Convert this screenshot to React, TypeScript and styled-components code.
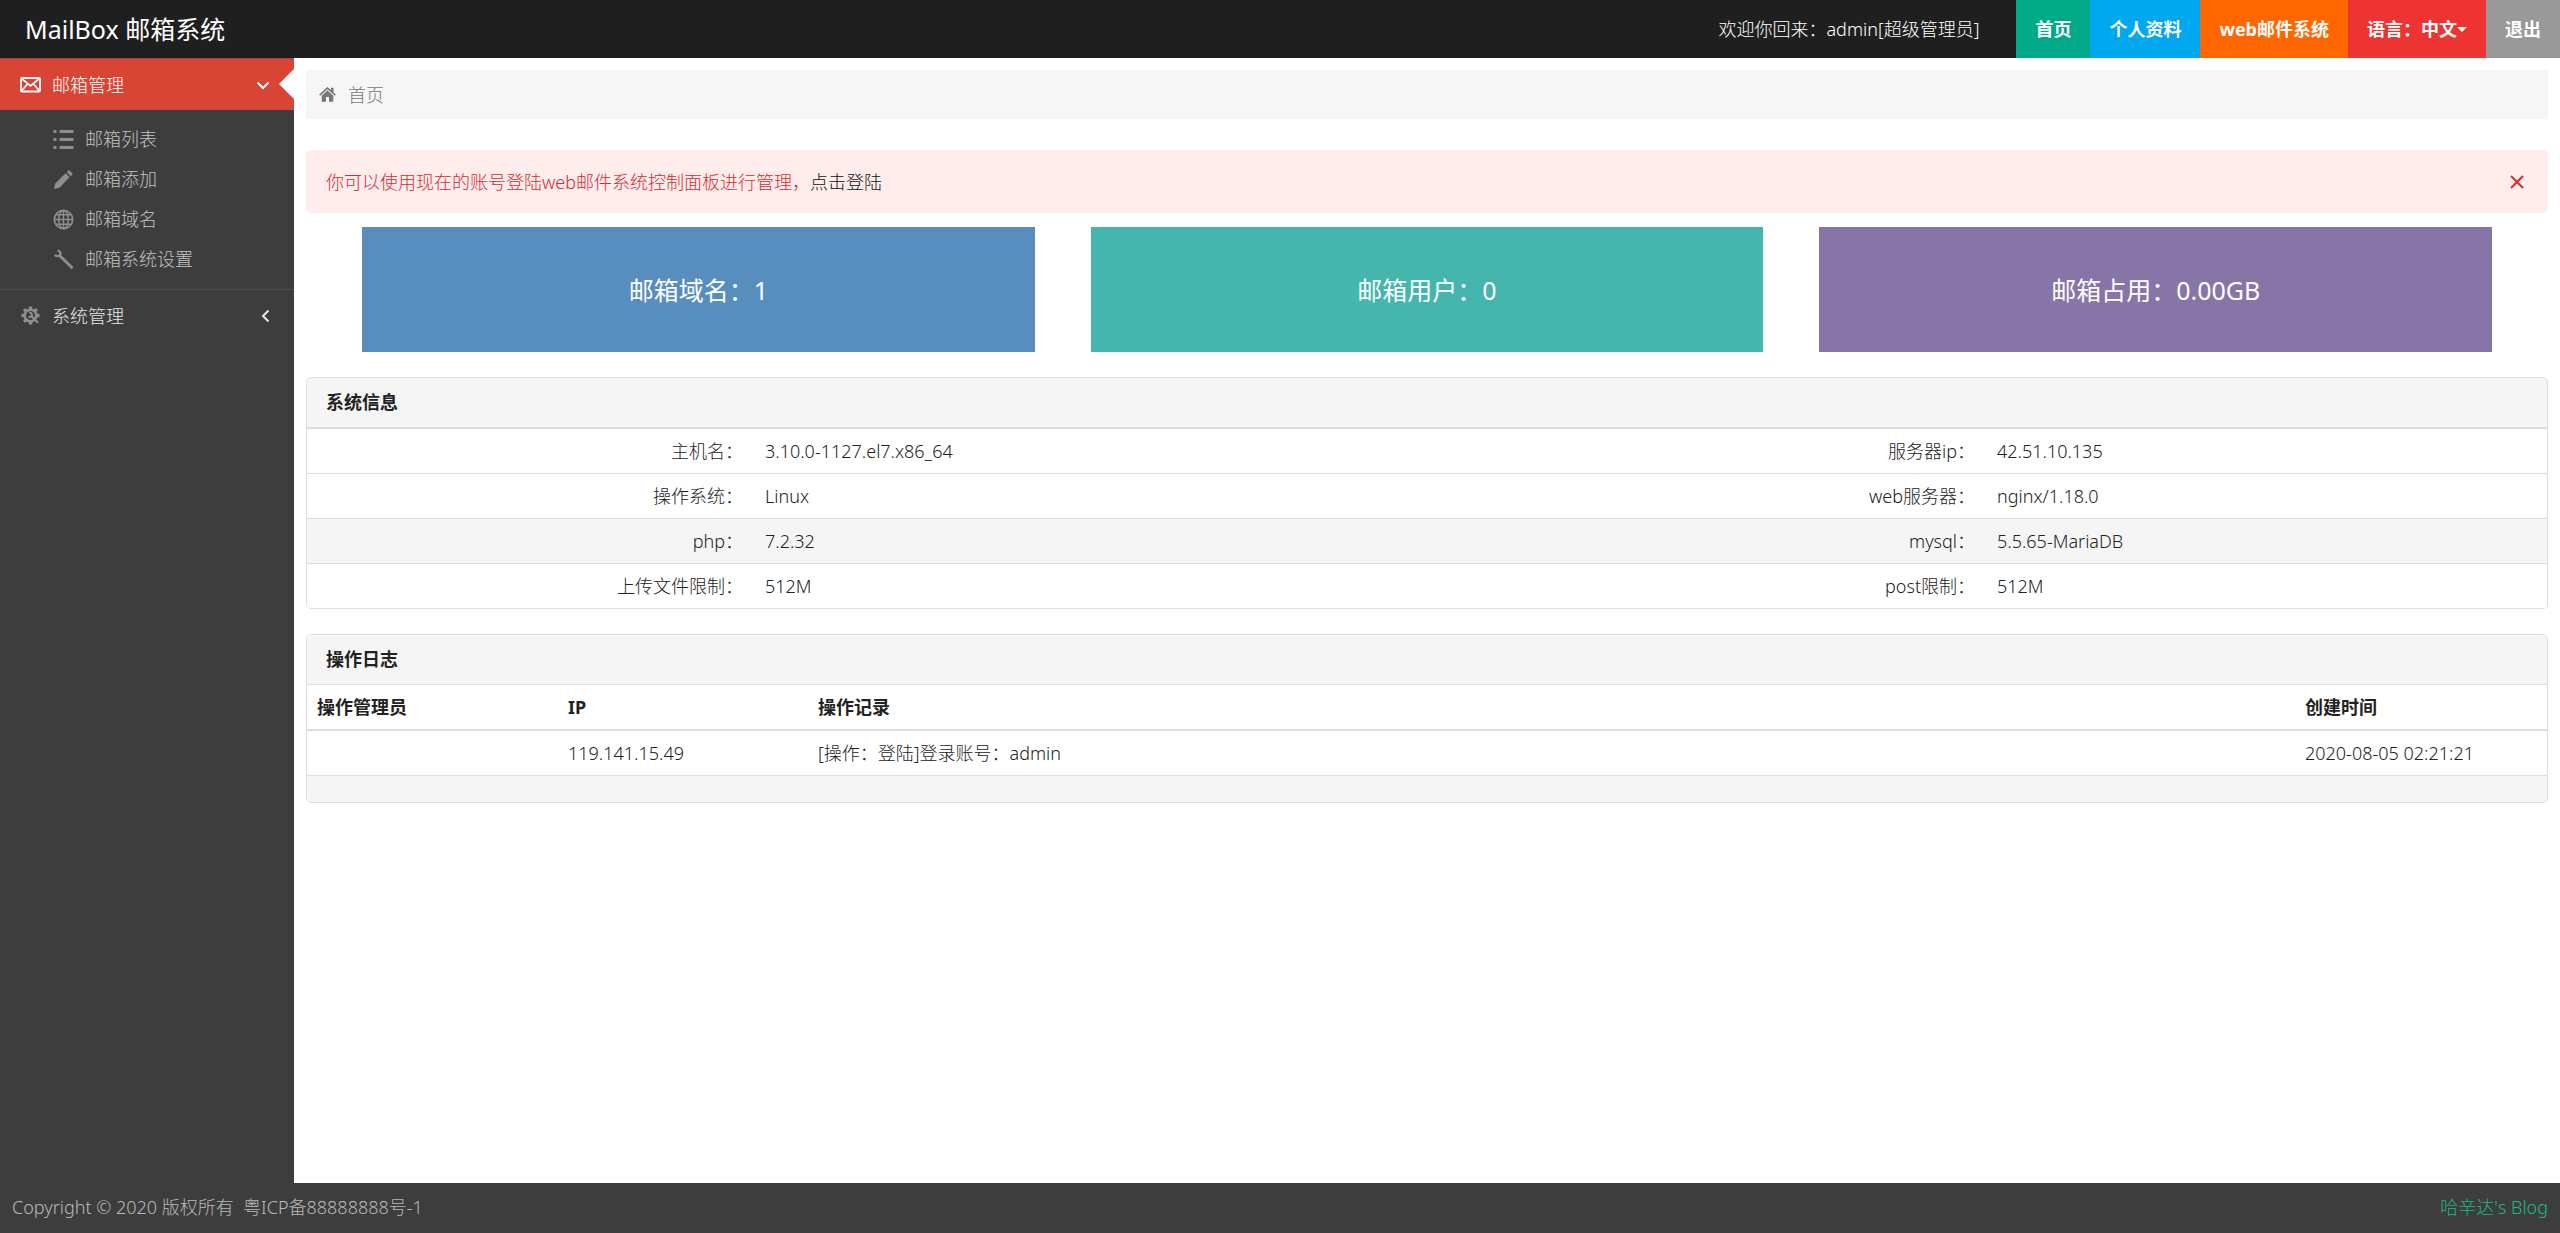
import React from "react";
import styled, { createGlobalStyle } from "styled-components";

const GlobalStyle = createGlobalStyle`
  * { box-sizing: border-box; }
  body {
    margin: 0;
    background: #fff;
    color: #222;
    font-family: "Noto Sans", "Noto Sans CJK SC", sans-serif;
    font-size: 18px;
    font-weight: 300;
    line-height: 24px;
  }
  a { color: inherit; text-decoration: none; }
  button { font: inherit; color: inherit; border: 0; background: none; padding: 0; cursor: pointer; }
`;

const Page = styled.div`
  min-height: 100vh;
  display: flex;
  flex-direction: column;
`;

const TopBar = styled.header`
  height: 58px;
  display: flex;
  align-items: center;
  background: #1f1f1f;
  color: #fff;
`;

const Brand = styled.a`
  flex: 1;
  padding-left: 25px;
  font-size: 25px;
  font-weight: 400;
  line-height: 32px;
`;

const Welcome = styled.span`
  margin-right: 37px;
`;

const TopNav = styled.nav`
  align-self: stretch;
  display: flex;
`;

const NavLink = styled.a<{ $bg: string }>`
  display: flex;
  align-items: center;
  padding: 0 19px;
  background: ${(p) => p.$bg};
  font-weight: 700;
`;

const NavButton = styled.button<{ $bg: string }>`
  && {
    display: flex;
    align-items: center;
    padding: 0 19px;
    background: ${(p) => p.$bg};
    font-weight: 700;
  }
`;

const Caret = styled.span`
  border: 5px solid transparent;
  border-top-color: #fff;
  border-bottom: 0;
`;

const Body = styled.div`
  flex: 1;
  display: flex;
`;

const Sidebar = styled.nav`
  flex: none;
  width: 294px;
  background: #3d3d3d;
`;

const Group = styled.a<{ $active?: boolean }>`
  position: relative;
  display: flex;
  align-items: center;
  gap: 11px;
  height: 52px;
  padding: 0 24px 0 20px;
  background: ${(p) => (p.$active ? "#d84534" : "transparent")};
  border-top: 1px solid ${(p) => (p.$active ? "#8a4a40" : "#4d4d4d")};
  color: ${(p) => (p.$active ? "#fff" : "#e6e6e6")};
`;

const GroupLabel = styled.span`
  flex: 1;
`;

const Notch = styled.span`
  position: absolute;
  top: 10px;
  right: 0;
  border: 15px solid transparent;
  border-right-color: #fff;
  border-left: 0;
`;

const SubMenu = styled.ul`
  list-style: none;
  margin: 0;
  padding: 9px 0 10px;
`;

const SubLink = styled.a`
  display: flex;
  align-items: center;
  gap: 11px;
  height: 40px;
  padding-left: 53px;
  color: #c2c2c2;
  svg { color: #8e8e8e; }
`;

const Main = styled.main`
  flex: 1;
  min-width: 0;
  padding: 12px 12px 24px;
`;

const Breadcrumb = styled.nav`
  display: flex;
  align-items: center;
  gap: 12px;
  height: 49px;
  padding: 0 13px;
  background: #f6f6f6;
  color: #777;
`;

const Alert = styled.div`
  display: flex;
  align-items: center;
  justify-content: space-between;
  height: 63px;
  margin-top: 31px;
  padding: 0 24px 0 20px;
  border-radius: 5px;
  background: #ffecec;
  color: #d22c2c;
  a { color: #111; }
`;

const Stats = styled.section`
  display: grid;
  grid-template-columns: repeat(3, 1fr);
  gap: 56px;
  margin: 14px 0 25px;
  padding: 0 56px;
`;

const Stat = styled.div<{ $bg: string }>`
  display: flex;
  align-items: center;
  justify-content: center;
  height: 125px;
  background: ${(p) => p.$bg};
  color: #fff;
  font-size: 25px;
  font-weight: 400;
`;

const Panel = styled.section`
  margin-bottom: 25px;
  border: 1px solid #ddd;
  border-radius: 5px;
  overflow: hidden;
`;

const PanelTitle = styled.h2`
  margin: 0;
  height: 49px;
  padding: 0 19px;
  background: #f5f5f5;
  font-size: 18px;
  font-weight: 700;
  line-height: 49px;
`;

const Table = styled.table`
  width: 100%;
  table-layout: fixed;
  border-collapse: separate;
  border-spacing: 0;
  border-top: 1px solid #ddd;
`;

const Row = styled.tr<{ $striped?: boolean }>`
  background: ${(p) => (p.$striped ? "#f5f5f5" : "#fff")};
`;

const cellHeight = 45;

const Cell = styled.td`
  height: ${cellHeight}px;
  padding: 0 10px;
  border-top: 1px solid #ddd;
`;

const RowLabel = styled.th`
  height: ${cellHeight}px;
  padding: 0 12px;
  border-top: 1px solid #ddd;
  font-weight: 300;
  text-align: right;
`;

const LogHead = styled.th`
  height: ${cellHeight}px;
  padding: 0 10px;
  border-bottom: 1px solid #ddd;
  font-weight: 700;
  text-align: left;
`;

const EmptyCell = styled.td`
  height: 27px;
  border-top: 1px solid #ddd;
`;

const Footer = styled.footer`
  display: flex;
  align-items: center;
  justify-content: space-between;
  height: 50px;
  padding: 0 12px 2px;
  background: #3d3d3d;
  color: #b8b8b8;
  white-space: pre;
  a { color: #1db887; }
`;

const Svg = ({ children }: { children: React.ReactNode }) => (
  <svg width="21" height="21" viewBox="0 0 21 21" fill="none" stroke="currentColor" aria-hidden="true">
    {children}
  </svg>
);

const EnvelopeIcon = () => (
  <Svg>
    <rect x="1" y="4" width="19" height="13.500" rx="1" strokeWidth="1.800" />
    <path d="M1.500 4.500l9 7.500 9-7.500M1.500 17l6-7M19.500 17l-6-7" strokeWidth="1.700" />
  </Svg>
);

const ListIcon = () => (
  <Svg>
    <path d="M.5 2.500h3M.5 10.500h3M.5 18.500h3M6.500 2.500h14M6.500 10.500h14M6.500 18.500h14" strokeWidth="3" />
  </Svg>
);

const PencilIcon = () => (
  <Svg>
    <path d="M1 20l1.200-5.400L12.600 4.300l4 4L6.400 18.800zM13.700 3.200l1.500-1.500q.8-.7 1.600 0l2.400 2.400q.7.8 0 1.600l-1.500 1.500z" fill="currentColor" stroke="none" />
  </Svg>
);

const GlobeIcon = () => (
  <Svg>
    <circle cx="10.500" cy="10.500" r="9.200" strokeWidth="1.700" />
    <ellipse cx="10.500" cy="10.500" rx="4.800" ry="9" strokeWidth="1.400" />
    <path d="M10.500 1.500v18M1.500 10.500h18M3 5.800h15M3 15.200h15" strokeWidth="1.400" />
  </Svg>
);

const WrenchIcon = () => (
  <Svg>
    <path d="M4.600 1.500Q8 2.200 7.400 5.600 6 8.300 1.500 6.200" strokeWidth="2.200" />
    <path d="M6.800 6.800L18.600 18.300" strokeWidth="3" strokeLinecap="round" />
  </Svg>
);

const CogIcon = () => (
  <Svg>
    <g stroke="#8e8e8e">
      <circle cx="10.500" cy="10.500" r="5.800" strokeWidth="2.600" />
      <path d="M10.500 1.500v3.500M10.500 16v3.500M1.500 10.500H5M16 10.500h3.500M4.100 4.100l2.500 2.500M4.100 16.900l2.500-2.500M14.400 6.600l2.500-2.500" strokeWidth="3.400" />
      <path d="M9 7.500q2.800-.4 3 2.500-.5 2.400-3.500 1.800M12 11.800l6 6" strokeWidth="2" />
    </g>
  </Svg>
);

const HomeIcon = () => (
  <svg width="17" height="17" viewBox="0 0 17 17" fill="currentColor" aria-hidden="true">
    <path d="M8.500 1L.2 8.600l1 1.200L8.500 3.300l7.300 6.500 1-1.200L14.500 6.500V1.800H12v2.400z" />
    <path d="M8.500 4.600L2.700 9.700v6h4.300V11h3v4.700h4.300v-6z" />
  </svg>
);

const Chevron = ({ open }: { open?: boolean }) => (
  <svg width="14" height="14" viewBox="0 0 14 14" fill="none" stroke="currentColor" strokeWidth="2" aria-hidden="true">
    <path d={open ? "M1.500 4.500L7 10l5.500-5.500" : "M12.500 1.500L7 7l5.500 5.500"} />
  </svg>
);

const CloseIcon = () => (
  <svg width="14" height="14" viewBox="0 0 14 14" fill="none" stroke="currentColor" strokeWidth="2" aria-hidden="true">
    <path d="M1 1l12 12M13 1L1 13" />
  </svg>
);

const subItems = [
  { label: "邮箱列表", icon: <ListIcon /> },
  { label: "邮箱添加", icon: <PencilIcon /> },
  { label: "邮箱域名", icon: <GlobeIcon /> },
  { label: "邮箱系统设置", icon: <WrenchIcon /> },
];

const stats = [
  { text: "邮箱域名：1", bg: "#578ebe" },
  { text: "邮箱用户：0", bg: "#44b6ae" },
  { text: "邮箱占用：0.00GB", bg: "#8775a7" },
];

const info = [
  ["主机名：", "3.10.0-1127.el7.x86_64", "服务器ip：", "42.51.10.135"],
  ["操作系统：", "Linux", "web服务器：", "nginx/1.18.0"],
  ["php：", "7.2.32", "mysql：", "5.5.65-MariaDB"],
  ["上传文件限制：", "512M", "post限制：", "512M"],
];

export default function App() {
  return (
    <Page>
      <GlobalStyle />
      <TopBar>
        <Brand href="#">MailBox 邮箱系统</Brand>
        <Welcome>欢迎你回来：admin[超级管理员]</Welcome>
        <TopNav>
          <NavLink href="#" $bg="#00a988">首页</NavLink>
          <NavLink href="#" $bg="#00a8f0">个人资料</NavLink>
          <NavLink href="#" $bg="#ff6600">web邮件系统</NavLink>
          <NavButton type="button" $bg="#ee3333">语言：中文<Caret /></NavButton>
          <NavLink href="#" $bg="#999999">退出</NavLink>
        </TopNav>
      </TopBar>
      <Body>
        <Sidebar>
          <Group href="#" $active>
            <EnvelopeIcon />
            <GroupLabel>邮箱管理</GroupLabel>
            <Chevron open />
            <Notch />
          </Group>
          <SubMenu>
            {subItems.map((item) => (
              <li key={item.label}>
                <SubLink href="#">{item.icon}{item.label}</SubLink>
              </li>
            ))}
          </SubMenu>
          <Group href="#">
            <CogIcon />
            <GroupLabel>系统管理</GroupLabel>
            <Chevron />
          </Group>
        </Sidebar>
        <Main>
          <Breadcrumb>
            <HomeIcon />
            <a href="#">首页</a>
          </Breadcrumb>
          <Alert role="alert">
            <span>你可以使用现在的账号登陆web邮件系统控制面板进行管理，<a href="#">点击登陆</a></span>
            <button type="button" aria-label="关闭"><CloseIcon /></button>
          </Alert>
          <Stats>
            {stats.map((s) => (
              <Stat key={s.text} $bg={s.bg}>{s.text}</Stat>
            ))}
          </Stats>
          <Panel>
            <PanelTitle>系统信息</PanelTitle>
            <Table>
              <colgroup>
                <col width="20%" />
                <col width="30%" />
                <col width="25%" />
                <col width="25%" />
              </colgroup>
              <tbody>
                {info.map(([l1, v1, l2, v2], i) => (
                  <Row key={l1} $striped={i === 2}>
                    <RowLabel scope="row">{l1}</RowLabel>
                    <Cell>{v1}</Cell>
                    <RowLabel scope="row">{l2}</RowLabel>
                    <Cell>{v2}</Cell>
                  </Row>
                ))}
              </tbody>
            </Table>
          </Panel>
          <Panel>
            <PanelTitle>操作日志</PanelTitle>
            <Table>
              <colgroup>
                <col width="251" />
                <col width="250" />
                <col />
                <col width="252" />
              </colgroup>
              <thead>
                <Row>
                  <LogHead>操作管理员</LogHead>
                  <LogHead>IP</LogHead>
                  <LogHead>操作记录</LogHead>
                  <LogHead>创建时间</LogHead>
                </Row>
              </thead>
              <tbody>
                <Row>
                  <Cell />
                  <Cell>119.141.15.49</Cell>
                  <Cell>[操作：登陆]登录账号：admin</Cell>
                  <Cell>2020-08-05 02:21:21</Cell>
                </Row>
                <Row $striped>
                  <EmptyCell colSpan={4} />
                </Row>
              </tbody>
            </Table>
          </Panel>
        </Main>
      </Body>
      <Footer>
        <span>Copyright © 2020 版权所有  粤ICP备88888888号-1</span>
        <a href="#">哈辛达's Blog</a>
      </Footer>
    </Page>
  );
}
